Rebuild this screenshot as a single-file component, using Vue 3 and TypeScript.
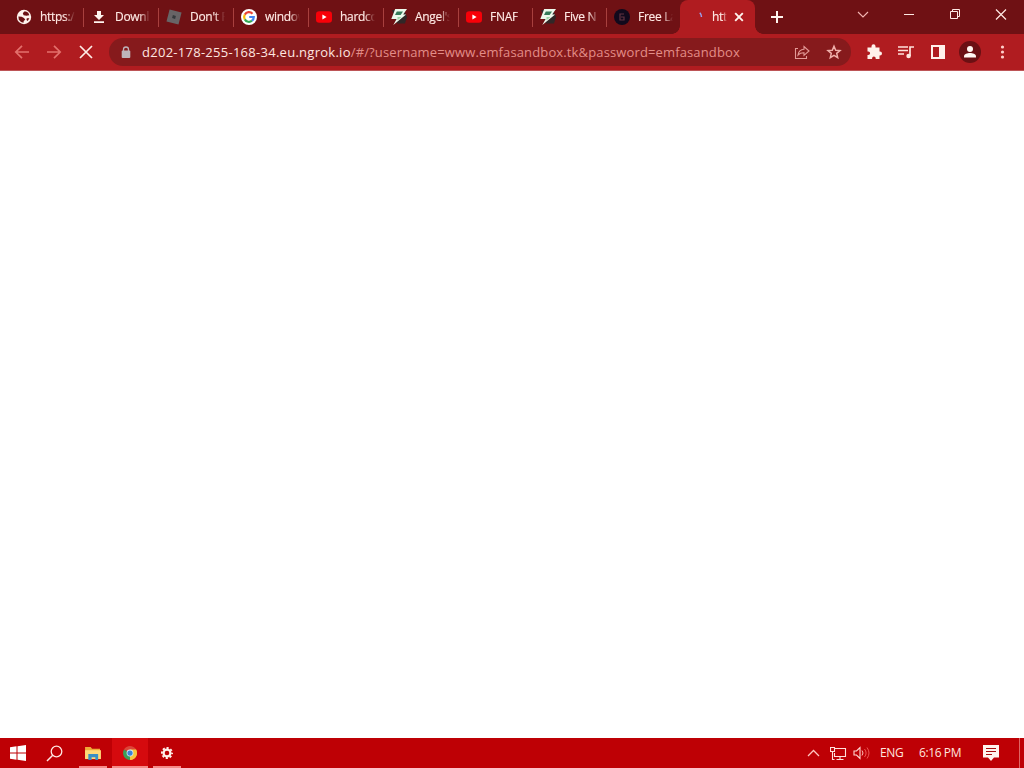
<script setup lang="ts">
interface Tab {
  icon: 'globe' | 'download' | 'roblox' | 'google' | 'youtube' | 'bolt' | 'dark'
  title: string
}

const tabs: Tab[] = [
  { icon: 'globe', title: 'https://' },
  { icon: 'download', title: 'Downl' },
  { icon: 'roblox', title: "Don't P" },
  { icon: 'google', title: 'window' },
  { icon: 'youtube', title: 'hardco' },
  { icon: 'bolt', title: "Angel's" },
  { icon: 'youtube', title: 'FNAF' },
  { icon: 'bolt', title: 'Five N' },
  { icon: 'dark', title: 'Free La' },
]
</script>

<template>
  <div class="screen">
    <header class="tabstrip">
      <div v-for="(tab, i) in tabs" :key="i" class="tab" :class="{ narrow: i > 5, last: i === tabs.length - 1 }">
        <svg class="fav" viewBox="0 0 16 16">
          <template v-if="tab.icon === 'globe'">
            <circle cx="8" cy="8" r="7.2" fill="#fff4ee" />
            <path d="M8.300 2.600L6.800 4.300 7.600 6.300 10.500 6.800 13.300 6.200 12.300 3.800 10 2.500zM2.400 7.600L5.600 7.800 8 9 9.300 10.800 7.700 12 7.500 13.700 5 13 2.800 10.700zM10.800 9.300h2.600l-1.700 2.600-1.200-.8z" fill="#6b1215" />
          </template>
          <path v-else-if="tab.icon === 'download'" d="M6 2h4v4h3L8 11 3 6h3zM3 12.3h10v1.8H3z" fill="#fff4ee" />
          <template v-else-if="tab.icon === 'roblox'">
            <path d="M3.6.6L15.6 3.6 12.5 15.5.5 12.4z" fill="#686466" />
            <path d="M6.9 6.1l3 .8-.8 3-3-.8z" fill="#35383b" />
          </template>
          <template v-else-if="tab.icon === 'google'">
            <circle cx="8" cy="8" r="8" fill="#fff" />
            <g fill="none" stroke-width="2.2">
              <path d="M3.8 5.6A4.8 4.8 0 0 1 11.5 4.7" stroke="#e94335" />
              <path d="M3.8 5.6A4.8 4.8 0 0 0 3.8 10.4" stroke="#fbbc05" />
              <path d="M3.8 10.4A4.8 4.8 0 0 0 11 11.7" stroke="#34a853" />
              <path d="M11 11.7A4.8 4.8 0 0 0 12.8 8H8.2" stroke="#4285f4" />
            </g>
          </template>
          <template v-else-if="tab.icon === 'youtube'">
            <rect x="0" y="2.2" width="16" height="11.6" rx="3.2" fill="#f80008" />
            <path d="M6.4 5.6v4.8L10.6 8z" fill="#fff" />
          </template>
          <template v-else-if="tab.icon === 'bolt'">
            <path d="M1 1h12l3 7-2 6.500H6z" fill="#302727" />
            <path d="M4.200 0H16L12.200 5.600h2.900L2.300 16 5.600 10H.3z" fill="#edf9ec" />
            <path d="M5.800 2.500H12L9.600 6H4z" fill="#347b59" />
            <path d="M6.500 8h4l-4 3.200z" fill="#9bd6a9" />
          </template>
          <template v-else>
            <circle cx="8" cy="8" r="8" fill="#11091c" />
            <path d="M10 5H6v6h4V8H7" fill="none" stroke="#633341" stroke-width="1.2" />
          </template>
        </svg>
        <span class="title">{{ tab.title }}</span>
      </div>

      <div class="tab active">
        <svg class="fav" viewBox="0 0 16 16"><path d="M12.8 3.800q1.800 1.800 1.700 4.200" stroke="#99a0ee" stroke-width="1.5" fill="none" /></svg>
        <span class="title">http</span>
        <svg class="close" viewBox="0 0 10 10"><path d="M1.2 1.2l7.6 7.6M8.8 1.2L1.2 8.8" stroke="#fff4ee" stroke-width="1.9" /></svg>
      </div>
      <svg class="plus" viewBox="0 0 14 14"><path d="M7 1v12M1 7h12" stroke="#fff4ee" stroke-width="2" /></svg>

      <div class="caption">
        <svg viewBox="0 0 46 28"><path d="M18 12l5 5 5-5" fill="none" stroke="#f3b6b3" stroke-width="1.1" /></svg>
        <svg viewBox="0 0 46 28"><path d="M18 14.5h10" stroke="#ffe9e4" /></svg>
        <svg viewBox="0 0 46 28"><path d="M18.5 11.5h7v7h-7zM20.5 11V9.500h7v7H26" fill="none" stroke="#ffe9e4" /></svg>
        <svg viewBox="0 0 46 28"><path d="M18 9.500l10 10M28 9.500l-10 10" stroke="#ffe9e4" stroke-width="1.2" /></svg>
      </div>
    </header>

    <nav class="toolbar">
      <svg class="nav" viewBox="0 0 16 16"><path d="M15 8H2M8 1.800L1.800 8 8 14.200" fill="none" stroke="#e3706c" stroke-width="1.700" /></svg>
      <svg class="nav" viewBox="0 0 16 16"><path d="M1 8h13M8 1.800L14.200 8 8 14.200" fill="none" stroke="#e3706c" stroke-width="1.700" /></svg>
      <svg class="nav" viewBox="0 0 16 16"><path d="M2 2l12 12M14 2L2 14" stroke="#ffece7" stroke-width="1.700" /></svg>
      <div class="omnibox">
        <svg class="lock" viewBox="0 0 10 13"><path d="M2.500 5V3.500a2.500 2.500 0 0 1 5 0V5" fill="none" stroke="#beb4ba" stroke-width="1.300" /><rect x=".7" y="4.500" width="8.600" height="7.500" rx="1" fill="#beb4ba" /></svg>
        <div class="url"><span class="host">d202-178-255-168-34.eu.ngrok.io</span><span class="path">/#/?username=www.emfasandbox.tk&amp;password=emfasandbox</span></div>
        <svg class="share" viewBox="0 0 16 16"><path d="M4 4.500H1.500v10h11V12M4 11c.6-4 2.400-5.700 6-5.800V2.500L15 7l-5 4.300V8.700C7.500 8.600 5.700 9.200 4 11z" fill="none" stroke="#e39a97" stroke-width="1.100" /></svg>
        <svg class="star" viewBox="0 0 16 16"><path d="M8 2.200l1.700 4 4.300.4-3.300 2.800 1 4.300L8 11.400l-3.700 2.300 1-4.300L2 6.600l4.300-.4z" fill="none" stroke="#f0b0ab" stroke-width="1.500" /></svg>
      </div>
      <div class="actions">
        <svg viewBox="0 0 16 16"><path d="M1.500 3.500h4V2.300a2 2 0 0 1 4 0v1.200h4v4h.5a2 2 0 0 1 0 4h-.5V15H9.700v-.7a1.800 1.800 0 0 0-3.600 0v.7H1.500v-4h.8a1.800 1.800 0 0 0 0-3.600h-.8z" fill="#fff1eb" /></svg>
        <svg viewBox="0 0 16 16"><path d="M0 3h10M0 6.500h10M0 10h6M12 12V3h4" fill="none" stroke="#ffe2dc" stroke-width="1.700" /><circle cx="10.600" cy="12" r="2.300" fill="#ffe2dc" /></svg>
        <svg viewBox="0 0 16 16"><path fill-rule="evenodd" d="M1 1h14v14H1zM3 3v10h6V3z" fill="#fff1eb" /></svg>
        <svg class="avatar" viewBox="0 0 22 22"><circle cx="11" cy="11" r="11" fill="#6b1013" /><circle cx="11" cy="8" r="3" fill="#fff7f1" /><path d="M5 16.500v-1.300C5 13 8.500 12 11 12s6 1 6 3.200v1.300z" fill="#fff7f1" /></svg>
        <svg class="menu" viewBox="0 0 16 16"><g fill="#ffcfca"><circle cx="8.500" cy="3" r="1.600" /><circle cx="8.500" cy="8" r="1.600" /><circle cx="8.500" cy="13" r="1.600" /></g></svg>
      </div>
    </nav>

    <main class="page"></main>

    <footer class="taskbar">
      <div class="task start"><svg width="16" height="16" viewBox="0 0 16 16"><path d="M0 2.200L6.500 1.300V7.500H0zM7.500 1.200L16 0v7.500H7.500zM0 8.500h6.500v6.200L0 13.800zM7.500 8.500H16V16l-8.500-1.200z" fill="#fff" /></svg></div>
      <div class="task search"><svg width="17" height="17" viewBox="0 0 17 17"><circle cx="10.500" cy="6.500" r="5.300" fill="none" stroke="#ffe6e2" stroke-width="1.300" /><path d="M6.700 10.300L1 16" stroke="#ffe6e2" stroke-width="1.500" /></svg></div>
      <div class="task explorer open">
        <svg width="16" height="14" viewBox="0 0 17 15"><path d="M0 1h6l1.500 2H16v10H0z" fill="#efaa38" /><path d="M0 4.500h17V14H0z" fill="#ffd978" /><path d="M3.500 15V8.500h10.500V15h-3v-3h-4v3z" fill="#398fc5" /></svg>
      </div>
      <div class="task chrome open">
        <svg width="14" height="14" viewBox="0 0 16 16"><path d="M8 8L1.100 4A8 8 0 0 1 14.900 4z" fill="#dc4538" /><path d="M8 8L14.900 4A8 8 0 0 1 8 16z" fill="#f8c53b" /><path d="M8 8v8A8 8 0 0 1 1.100 4z" fill="#3c9e58" /><path d="M8 4h6.900A8 8 0 0 1 8 16l3.500-6z" fill="#f8c53b" /><circle cx="8" cy="8" r="3.900" fill="#dbeaf0" /><circle cx="8" cy="8" r="3" fill="#3c83d6" /></svg>
      </div>
      <div class="task settings open">
        <svg width="12" height="12" viewBox="0 0 14 14"><circle cx="7" cy="7" r="5.900" fill="none" stroke="#fff0eb" stroke-width="2.200" stroke-dasharray="2.500 2.134" stroke-dashoffset="1.250" /><circle cx="7" cy="7" r="4" fill="none" stroke="#fff0eb" stroke-width="2.600" /></svg>
      </div>
      <div class="tray">
        <svg class="chev" viewBox="0 0 13 8"><path d="M1 7l5.500-5.500L12 7" fill="none" stroke="#ffc5c0" stroke-width="1.300" /></svg>
        <svg class="net" viewBox="0 0 17 15"><path d="M5 2.500h10.500v8H4.500V7M10 11v2.500M6.500 13.500h7M.5 1.500h4v4h-4zM2.500 5.500v8h2" fill="none" stroke="#ffe0db" stroke-width="1.100" /></svg>
        <svg class="sound" viewBox="0 0 17 14"><path d="M1 5h2.500L7 1.500v11L3.500 9H1z" fill="none" stroke="#ffd7d2" stroke-width="1.100" /><path d="M9 4.500q2 2.500 0 5" fill="none" stroke="#ffc0b9" /><path d="M11.500 3q3.200 4 0 8M14 1.500q4 5.500 0 11" fill="none" stroke="#ee5554" /></svg>
        <span class="lang">ENG</span>
        <span class="clock">6:16 PM</span>
        <svg class="note" viewBox="0 0 16 16"><path d="M0 0h16v12.500h-5L8 16l-3-3.500H0z" fill="#fff4ee" /><path d="M3 3.500h10M3 6.500h10M3 9.500h6" stroke="#a60b0e" stroke-width="1.200" /></svg>
        <span class="peek"></span>
      </div>
    </footer>
  </div>
</template>

<style>
body { margin: 0; overflow: hidden; }
</style>

<style scoped>
.screen {
  width: 1024px;
  height: 768px;
  display: flex;
  flex-direction: column;
  background: #fff;
  font-family: "Open Sans", "Noto Sans", sans-serif;
  font-size: 12px;
}
svg { display: block; flex: none; }
.tabstrip {
  height: 34px;
  flex: none;
  display: flex;
  align-items: center;
  padding-left: 9px;
  background: #6f1114;
  box-sizing: border-box;
}
.tab {
  width: 75px;
  height: 34px;
  flex: none;
  display: flex;
  align-items: center;
  padding-left: 7px;
  box-sizing: border-box;
  position: relative;
}
.narrow { width: 74px; }
.tab:not(.last):not(.active)::after {
  content: "";
  position: absolute;
  right: 0;
  top: 8px;
  width: 1px;
  height: 19px;
  background: #a8403e;
}
.fav { width: 16px; height: 16px; }
.title {
  width: 35px;
  margin-left: 8px;
  overflow: hidden;
  white-space: nowrap;
  color: #ffe9e4;
  letter-spacing: -0.3px;
  -webkit-text-stroke: 0.15px #ffe9e4;
  line-height: 18px;
  mask-image: linear-gradient(90deg, #000 70%, transparent);
}
.active {
  width: 75px;
  background: #b01c20;
  border-radius: 8px 8px 0 0;
  margin-left: -1px;
}
.active::before, .active::after {
  content: "";
  position: absolute;
  bottom: 0;
  width: 8px;
  height: 8px;
}
.active::before { left: -8px; background: radial-gradient(circle at 0 0, #6f1114 7.5px, #b01c20 8px); }
.active::after { right: -8px; background: radial-gradient(circle at 100% 0, #6f1114 7.5px, #b01c20 8px); }
.active .title { width: 15px; margin-left: 9px; }
.close { width: 10px; height: 10px; margin-left: 7px; }
.plus { width: 14px; height: 14px; margin-left: 15px; }
.caption { display: flex; margin-left: auto; height: 34px; }
.caption svg { width: 46px; height: 28px; }
.toolbar {
  height: 37px;
  flex: none;
  display: flex;
  align-items: center;
  padding-left: 14px;
  box-sizing: border-box;
  background: #b01c20;
  border-bottom: 1px solid #bd5557;
}
.nav { width: 16px; height: 16px; margin-right: 16px; }
.omnibox {
  width: 742px;
  height: 28px;
  margin-left: -1px;
  border-radius: 14px;
  background: #861a1c;
  display: flex;
  align-items: center;
  padding-left: 12px;
  box-sizing: border-box;
}
.lock { width: 10px; height: 13px; }
.url {
  width: 600px;
  margin-left: 11px;
  font-size: 13px;
  line-height: 20px;
  white-space: nowrap;
}
.host { color: #ffe6e0; letter-spacing: 0.27px; }
.path { color: #e38d88; letter-spacing: 0.135px; }
.share { width: 16px; height: 16px; margin-left: 52px; }
.star { width: 16px; height: 16px; margin-left: 16px; }
.actions { display: flex; align-items: center; margin-left: 15px; gap: 16px; }
.actions svg { width: 16px; height: 16px; }
.actions .avatar { width: 22px; height: 22px; margin: 0 -3px; }
.page { flex: 1; background: #fff; }
.taskbar {
  height: 30px;
  flex: none;
  display: flex;
  background: #be0005;
}
.task {
  width: 36px;
  height: 30px;
  flex: none;
  display: flex;
  align-items: center;
  justify-content: center;
  box-sizing: border-box;
}
.search { width: 37px; }
.explorer { width: 28px; margin-left: 6px; }
.chrome { width: 36px; margin-left: 5px; background: #d50a0e; }
.settings { width: 28px; margin-left: 5px; }
.open { border-bottom: 2px solid #f58b89; padding-top: 2px; }
.tray { display: flex; align-items: center; margin-left: auto; color: #ffe5df; white-space: nowrap; }
.chev { width: 13px; height: 8px; margin-right: 10px; }
.net { width: 17px; height: 15px; margin-right: 6px; }
.sound { width: 17px; height: 14px; margin-right: 10px; }
.lang, .clock { padding-bottom: 2px; letter-spacing: -0.4px; }
.lang { width: 24px; }
.clock { width: 43px; margin-left: 15px; }
.note { width: 16px; height: 16px; margin-left: 21px; }
.peek { width: 1px; height: 30px; background: #df6665; margin: 0 4px 0 20px; }
</style>
